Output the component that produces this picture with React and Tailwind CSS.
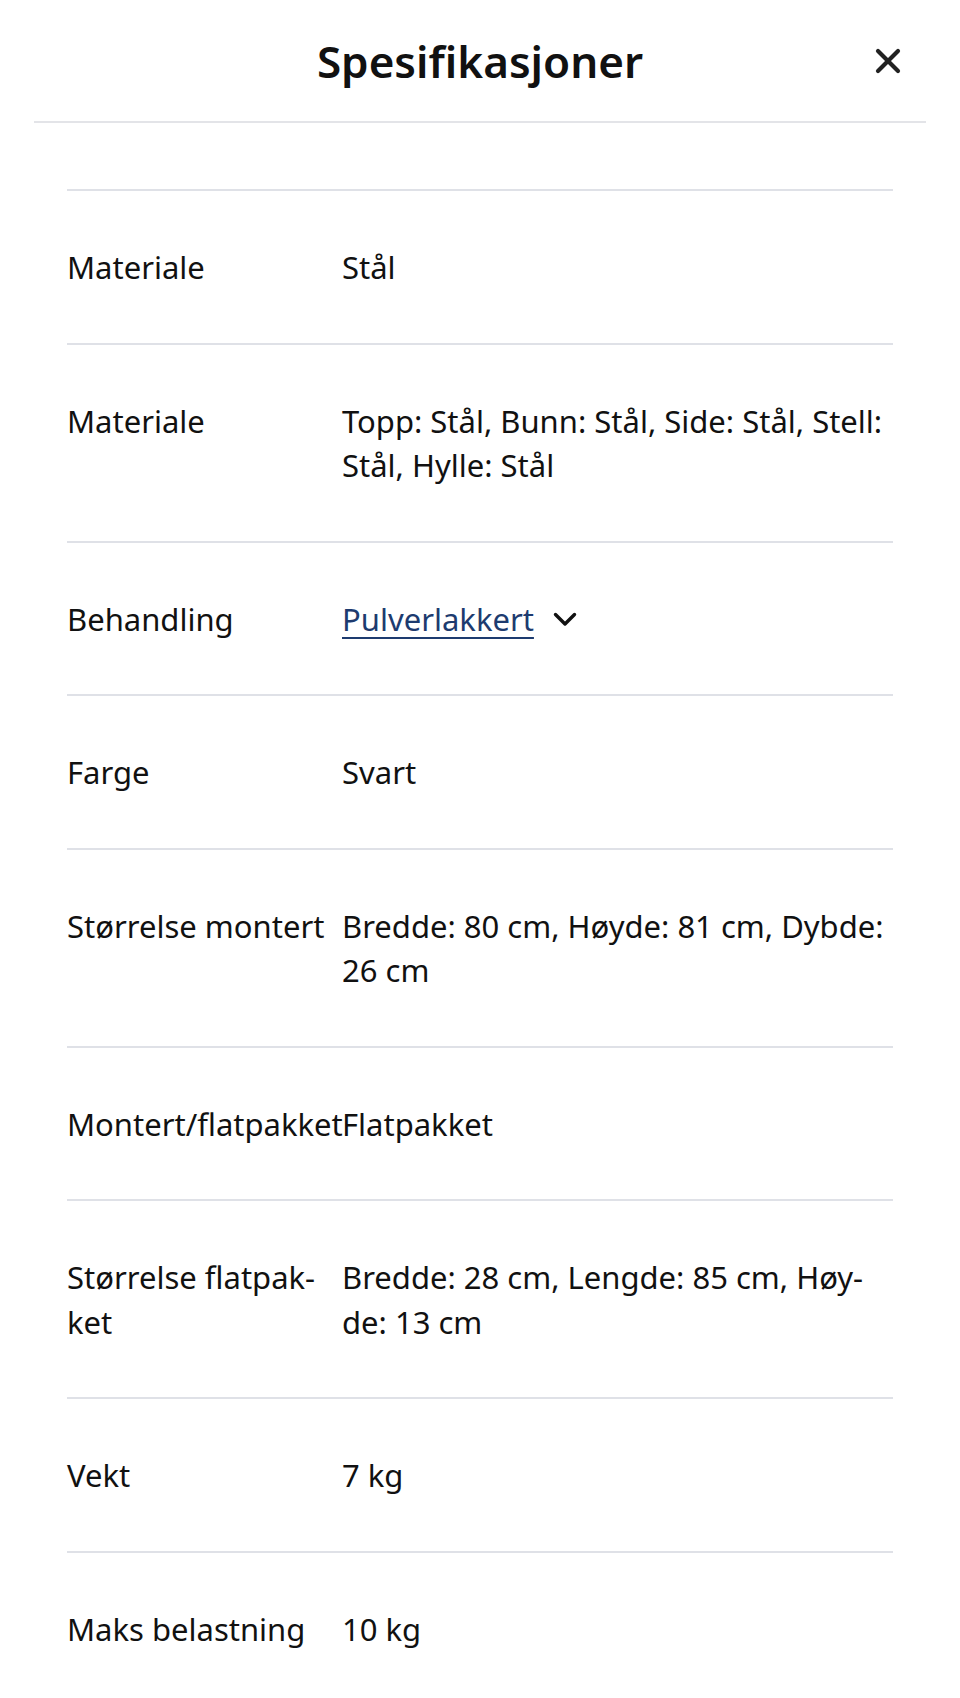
import { X } from "lucide-react";

const specs = [
  { label: "Materiale", value: "Stål" },
  { label: "Materiale", value: "Topp: Stål, Bunn: Stål, Side: Stål, Stell: Stål, Hylle: Stål" },
  { label: "Behandling", value: "Pulverlakkert", link: true },
  { label: "Farge", value: "Svart" },
  { label: "Størrelse montert", value: "Bredde: 80 cm, Høyde: 81 cm, Dybde: 26 cm" },
  { label: "Montert/flatpakket", value: "Flatpakket", nowrap: true },
  { label: "Størrelse flatpak\u00ADket", value: "Bredde: 28 cm, Lengde: 85 cm, Høy\u00ADde: 13 cm" },
  { label: "Vekt", value: "7 kg" },
  { label: "Maks belastning", value: "10 kg" },
];

function SpecRow({ label, value, link, nowrap }) {
  return (
    <div className="grid grid-cols-[275px_1fr] border-t-2 border-[#dfe1e7] pt-[54px] pb-[53px] text-[31px] leading-[44.5px]">
      <div className={nowrap ? "whitespace-nowrap" : ""}>{label}</div>
      <div>
        {link ? (
          <span className="inline-flex items-center gap-[19px]">
            <a href="#" className="text-[#1d3b6f] underline decoration-2 underline-offset-[6px]">
              {value}
            </a>
            {/* chevron */}
            <svg width="24" height="15" viewBox="0 0 24 15" fill="none" className="mt-[2px]">
              <path d="M2.5 2.5 12 12l9.5-9.5" stroke="#111" strokeWidth="3.4" strokeLinecap="round" strokeLinejoin="round" />
            </svg>
          </span>
        ) : (
          value
        )}
      </div>
    </div>
  );
}

export default function App() {
  return (
    <div className="min-h-[1698px] w-[960px] bg-white font-['Noto_Sans',sans-serif] text-[#111]">
      <div className="mx-[34px] grid h-[123px] grid-cols-[1fr_auto_1fr] items-center border-b-2 border-[#e3e4e8]">
        <div />
        <h1 className="text-[44px] font-semibold leading-none">Spesifikasjoner</h1>
        <div className="flex justify-end pr-[18px]">
          <button className="flex h-[40px] w-[40px] items-center justify-center text-[#222]">
            <X size={40} strokeWidth={2.5} />
          </button>
        </div>
      </div>
      <div className="px-[67px] pt-[66px]">
        {specs.map((s, i) => (
          <SpecRow key={i} {...s} />
        ))}
      </div>
    </div>
  );
}
